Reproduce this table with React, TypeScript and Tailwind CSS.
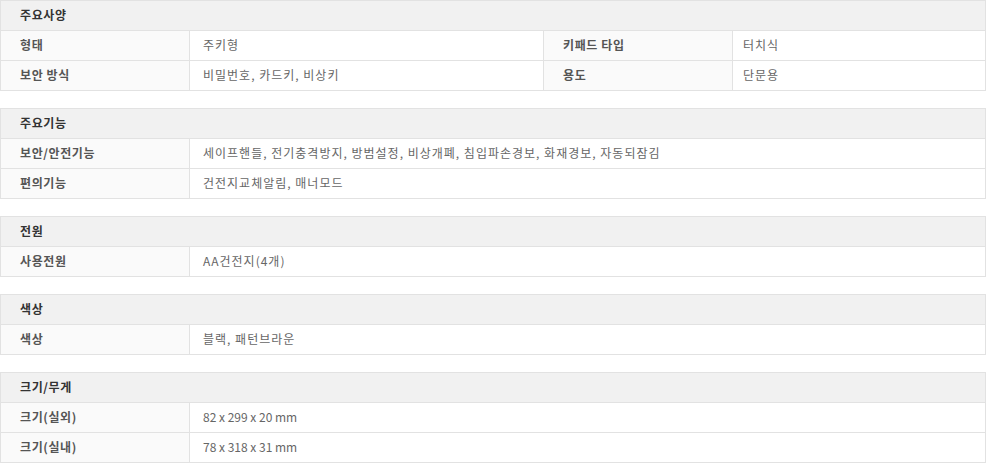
import React from "react";

type Row = [string, string] | [string, string, string, string];

const sections: { title: string; rows: Row[] }[] = [
  {
    title: "주요사양",
    rows: [
      ["형태", "주키형", "키패드 타입", "터치식"],
      ["보안 방식", "비밀번호, 카드키, 비상키", "용도", "단문용"],
    ],
  },
  {
    title: "주요기능",
    rows: [
      ["보안/안전기능", "세이프핸들, 전기충격방지, 방범설정, 비상개폐, 침입파손경보, 화재경보, 자동되잠김"],
      ["편의기능", "건전지교체알림, 매너모드"],
    ],
  },
  { title: "전원", rows: [["사용전원", "AA건전지(4개)"]] },
  { title: "색상", rows: [["색상", "블랙, 패턴브라운"]] },
  {
    title: "크기/무게",
    rows: [
      ["크기(실외)", "82 x 299 x 20 mm"],
      ["크기(실내)", "78 x 318 x 31 mm"],
    ],
  },
];

const hangul = /[\uAC00-\uD7A3]/;

function Label({ text }: { text: string }) {
  return (
    <div className="w-[189px] shrink-0 bg-[#fafafa] border-r border-[#e2e2e2] flex items-center pl-[19px] pb-[1px] font-bold text-[#555] tracking-[0.6px]">
      {text}
    </div>
  );
}

function Value({ text, className }: { text: string; className: string }) {
  return (
    <div
      className={
        className +
        " flex items-center pb-[1px] text-[#666] " +
        (hangul.test(text) ? "tracking-[1px]" : "tracking-[0px]")
      }
    >
      {text}
    </div>
  );
}

export default function App() {
  return (
    <div
      className="w-[987px] h-[475px] bg-white text-[12px] leading-none"
      style={{ fontFamily: '"Noto Sans CJK KR", "Noto Sans", sans-serif' }}
    >
      {sections.map((s, i) => (
        <div key={i} className="w-[986px] border border-[#e2e2e2] mb-[17px]">
          <div className="h-[29px] bg-[#f1f1f1] flex items-center pl-[19px] pb-[1px] font-bold text-[#333] tracking-[0.6px]">
            {s.title}
          </div>
          {s.rows.map((r, j) => (
            <div key={j} className="h-[30px] border-t border-[#e2e2e2] flex">
              <Label text={r[0]} />
              {r.length === 4 ? (
                <>
                  <Value
                    text={r[1]}
                    className="w-[354px] shrink-0 border-r border-[#e2e2e2] pl-[13px]"
                  />
                  <Label text={r[2]} />
                  <Value text={r[3]} className="flex-1 pl-[10px]" />
                </>
              ) : (
                <Value text={r[1]} className="flex-1 pl-[13px]" />
              )}
            </div>
          ))}
        </div>
      ))}
    </div>
  );
}
